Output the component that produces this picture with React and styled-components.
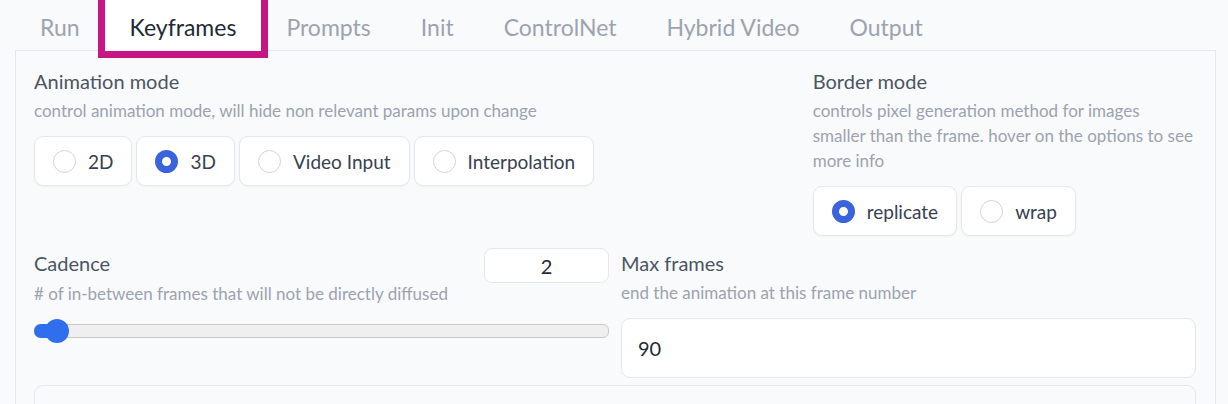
import React from 'react';
import styled, { createGlobalStyle } from 'styled-components';

const GlobalStyle = createGlobalStyle`
  html, body {
    margin: 0;
    padding: 0;
    background: #f9fafb;
  }
  body {
    font-family: Lato, "Liberation Sans", sans-serif;
    width: 1228px;
    height: 404px;
    overflow: hidden;
  }
`;

const tabs = ['Run', 'Keyframes', 'Prompts', 'Init', 'ControlNet', 'Hybrid Video', 'Output'];

const App = () => {
  return (
    <Page>
      <GlobalStyle />
      <TabBar>
        {tabs.map((t) => (
          <Tab key={t} active={t === 'Keyframes'}>{t}</Tab>
        ))}
      </TabBar>
      <Panel>
        <Row>
          <Block grow={2}>
            <Title>Animation mode</Title>
            <Info>control animation mode, will hide non relevant params upon change</Info>
            <RadioGroup>
              <RadioItem><Dot /><span>2D</span></RadioItem>
              <RadioItem><Dot checked /><span>3D</span></RadioItem>
              <RadioItem><Dot /><span>Video Input</span></RadioItem>
              <RadioItem><Dot /><span>Interpolation</span></RadioItem>
            </RadioGroup>
          </Block>
          <Block grow={1}>
            <Title>Border mode</Title>
            <Info>controls pixel generation method for images smaller than the frame. hover on the options to see more info</Info>
            <RadioGroup>
              <RadioItem><Dot checked /><span>replicate</span></RadioItem>
              <RadioItem><Dot /><span>wrap</span></RadioItem>
            </RadioGroup>
          </Block>
        </Row>
        <Row second>
          <Block grow={1}>
            <SliderHead>
              <Title>Cadence</Title>
              <NumberBox>2</NumberBox>
            </SliderHead>
            <Info tight>
              # of in-between frames that will not be directly diffused
            </Info>
            <Slider>
              <SliderFill style={{ width: '22px' }} />
              <Thumb style={{ left: '10px' }} />
            </Slider>
          </Block>
          <Block grow={1}>
            <Title>Max frames</Title>
            <Info>end the animation at this frame number</Info>
            <TextBox>90</TextBox>
          </Block>
        </Row>
        <NextBox />
      </Panel>
    </Page>
  );
};

const Page = styled.div`
  width: 100%;
  height: 404px;
  padding: 0 12px 0 15px;
  box-sizing: border-box;
  overflow: hidden;
`;

const TabBar = styled.div`
  display: flex;
  height: 50px;
  position: relative;
  z-index: 1;
`;

const Tab = styled.div`
  box-sizing: border-box;
  height: ${(p) => (p.active ? '58px' : '50px')};
  padding: ${(p) => (p.active ? '3px' : '4px')} 25px 0;
  margin: 0 ${(p) => (p.active ? '-7px' : '0')};
  display: flex;
  align-items: center;
  font-size: 23px;
  color: ${(p) => (p.active ? '#1f2937' : '#9ca3af')};
  background: ${(p) => (p.active ? '#ffffff' : 'transparent')};
  border: ${(p) => (p.active ? '7px solid #c71585' : 'none')};
  border-top-width: 0;
`;

const Panel = styled.div`
  border: 1px solid #e5e7eb;
  border-bottom: none;
  height: 354px;
  box-sizing: border-box;
  padding: 15px 19px 0 18px;
  background: #f9fafb;
  overflow: hidden;
`;

const Row = styled.div`
  display: flex;
  gap: 12px;
  margin-top: ${(p) => (p.second ? '12px' : '0')};
`;

const Block = styled.div`
  flex: ${(p) => p.grow} 1 0;
  min-width: 0;
  display: flex;
  flex-direction: column;
`;

const Title = styled.div`
  font-size: 20px;
  line-height: 30px;
  color: #4b5563;
`;

const Info = styled.div`
  font-size: 17px;
  line-height: 25px;
  color: #9ca3af;
  margin-top: ${(p) => (p.tight ? '-2px' : '2px')};
  margin-bottom: 13px;
`;

const RadioGroup = styled.div`
  display: flex;
  gap: 4px;
`;

const RadioItem = styled.label`
  display: flex;
  align-items: center;
  gap: 12px;
  height: 50px;
  box-sizing: border-box;
  padding: 0 18px;
  background: #ffffff;
  border: 1px solid #e5e7eb;
  border-radius: 9px;
  box-shadow: 0 1px 2px rgba(0, 0, 0, 0.04);
  font-size: 19px;
  color: #374151;
`;

const Dot = styled.span`
  width: 23px;
  height: 23px;
  box-sizing: border-box;
  border-radius: 50%;
  background: #ffffff;
  border: ${(p) => (p.checked ? '7.5px solid #3b63db' : '1px solid #d1d5db')};
`;

const SliderHead = styled.div`
  display: flex;
  justify-content: space-between;
  align-items: flex-start;
  height: 35px;
`;

const NumberBox = styled.div`
  width: 125px;
  height: 35px;
  box-sizing: border-box;
  background: #ffffff;
  border: 1px solid #e5e7eb;
  border-radius: 8px;
  display: flex;
  align-items: center;
  justify-content: center;
  font-size: 20px;
  color: #1f2937;
`;

const Slider = styled.div`
  position: relative;
  height: 12px;
  margin-top: 5px;
  background: #efefef;
  border: 1px solid #c8c8c8;
  border-radius: 6px;
`;

const SliderFill = styled.div`
  position: absolute;
  left: -1px;
  top: -1px;
  height: 14px;
  background: #2f6fed;
  border-radius: 7px;
`;

const Thumb = styled.div`
  position: absolute;
  top: 50%;
  width: 24px;
  height: 24px;
  margin-top: -12px;
  border-radius: 50%;
  background: #2f6fed;
`;

const TextBox = styled.div`
  height: 60px;
  box-sizing: border-box;
  background: #ffffff;
  border: 1px solid #e5e7eb;
  border-radius: 9px;
  display: flex;
  align-items: center;
  padding: 0 16px;
  font-size: 20px;
  color: #1f2937;
`;

const NextBox = styled.div`
  margin-top: 7px;
  height: 40px;
  background: #f9fafb;
  border: 1px solid #e5e7eb;
  border-radius: 9px;
`;

export default App;
